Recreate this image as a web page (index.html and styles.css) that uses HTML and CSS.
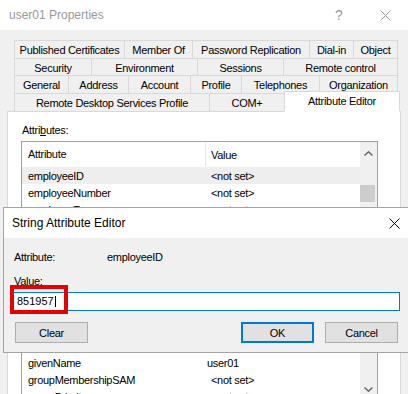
FILE: index.html
```html
<!DOCTYPE html>
<html lang="en">
<head>
    <meta charset="UTF-8">
    <title>user01 Properties</title>
    <link rel="stylesheet" href="styles.css">
</head>
<body>
    <div class="props">
        <div class="titlebar">
            <span class="title">user01 Properties</span>
            <span class="cap-btn help">?</span>
            <span class="cap-btn">
                <svg width="11" height="11" viewBox="0 0 11 11"><path d="M0.5 0.5L10.5 10.5M10.5 0.5L0.5 10.5" stroke="#9a9a9a" stroke-width="1" fill="none"/></svg>
            </span>
        </div>

        <div class="tabs">
            <div class="tab-row r1">
                <div class="tab t-pub">Published Certificates</div>
                <div class="tab t-mem">Member Of</div>
                <div class="tab t-pwd">Password Replication</div>
                <div class="tab t-dial">Dial-in</div>
                <div class="tab t-obj">Object</div>
            </div>
            <div class="tab-row r2">
                <div class="tab t-sec">Security</div>
                <div class="tab t-env">Environment</div>
                <div class="tab t-ses">Sessions</div>
                <div class="tab t-rem">Remote control</div>
            </div>
            <div class="tab-row r3">
                <div class="tab t-gen">General</div>
                <div class="tab t-addr">Address</div>
                <div class="tab t-acc">Account</div>
                <div class="tab t-prof">Profile</div>
                <div class="tab t-tel">Telephones</div>
                <div class="tab t-org">Organization</div>
            </div>
            <div class="tab-row r4">
                <div class="tab t-rds">Remote Desktop Services Profile</div>
                <div class="tab t-com">COM+</div>
                <div class="tab t-attr selected">Attribute Editor</div>
            </div>
        </div>

        <div class="panel">
            <div class="panel-label">Attri<u>b</u>utes:</div>
            <div class="list">
                <div class="list-body">
                    <div class="list-head">
                        <div class="col1">Attribute</div>
                        <div class="col2">Value</div>
                    </div>
                    <div class="row active"><div class="col1">employeeID</div><div class="col2 unset">&lt;not set&gt;</div></div>
                    <div class="row"><div class="col1">employeeNumber</div><div class="col2 unset">&lt;not set&gt;</div></div>
                    <div class="row"><div class="col1">employeeType</div><div class="col2 unset">&lt;not set&gt;</div></div>
                    <div class="row"><div class="col1">extensionAttribute1</div><div class="col2 unset">&lt;not set&gt;</div></div>
                    <div class="row"><div class="col1">extensionAttribute10</div><div class="col2 unset">&lt;not set&gt;</div></div>
                    <div class="row"><div class="col1">extensionAttribute11</div><div class="col2 unset">&lt;not set&gt;</div></div>
                    <div class="row"><div class="col1">extensionAttribute12</div><div class="col2 unset">&lt;not set&gt;</div></div>
                    <div class="row"><div class="col1">extensionAttribute13</div><div class="col2 unset">&lt;not set&gt;</div></div>
                    <div class="row"><div class="col1">extensionAttribute14</div><div class="col2 unset">&lt;not set&gt;</div></div>
                    <div class="row"><div class="col1">extensionAttribute15</div><div class="col2 unset">&lt;not set&gt;</div></div>
                    <div class="row"><div class="col1">facsimileTelephoneNumber</div><div class="col2 unset">&lt;not set&gt;</div></div>
                    <div class="row"><div class="col1">givenName</div><div class="col2">user01</div></div>
                    <div class="row"><div class="col1">groupMembershipSAM</div><div class="col2 unset">&lt;not set&gt;</div></div>
                    <div class="row"><div class="col1">groupPriority</div><div class="col2 unset">&lt;not set&gt;</div></div>
                </div>
                <div class="scrollbar">
                    <div class="sb-btn sb-up">
                        <svg width="9" height="5" viewBox="0 0 9 5"><path d="M0.5 4.5L4.5 0.8L8.5 4.5" stroke="#606060" stroke-width="1.4" fill="none"/></svg>
                    </div>
                    <div class="sb-thumb"></div>
                    <div class="sb-btn sb-down">
                        <svg width="9" height="5" viewBox="0 0 9 5"><path d="M0.5 0.5L4.5 4.2L8.5 0.5" stroke="#606060" stroke-width="1.4" fill="none"/></svg>
                    </div>
                </div>
            </div>
        </div>
    </div>

    <!-- String Attribute Editor, on top of the properties window -->
    <div class="dlg">
        <div class="dlg-title">
            <span class="dlg-caption">String Attribute Editor</span>
            <span class="cap-btn">
                <svg width="11" height="11" viewBox="0 0 11 11"><path d="M0.5 0.5L10.5 10.5M10.5 0.5L0.5 10.5" stroke="#000" stroke-width="1" fill="none"/></svg>
            </span>
        </div>
        <div class="dlg-body">
            <div class="field">
                <span class="field-label">Attribute:</span>
                <span>employeeID</span>
            </div>
            <div class="value-label">Value:</div>
            <div class="textbox">851957<span class="caret"></span></div>
            <div class="buttons">
                <button class="btn">Clear</button>
                <button class="btn default">OK</button>
                <button class="btn">Cancel</button>
            </div>
        </div>
        <div class="highlight"></div>
    </div>
</body>
</html>
```

FILE: styles.css
```css
* {
    box-sizing: border-box;
}
body {
    margin: 0;
    width: 408px;
    height: 394px;
    overflow: hidden;
    position: relative;
    background: #f0f0f0;
    font-family: "Liberation Sans", Arial, sans-serif;
    font-size: 11px;
    letter-spacing: -0.3px;
    color: #000;
}
.titlebar {
    height: 30px;
    background: #fff;
    display: flex;
    align-items: center;
    padding-left: 9px;
}
.title {
    flex: 1;
    font-size: 12px;
    letter-spacing: 0;
    color: #999;
}
.cap-btn {
    width: 46px;
    height: 30px;
    display: flex;
    align-items: center;
    justify-content: center;
}
.help {
    font-size: 14px;
    color: #9a9a9a;
    letter-spacing: 0;
}

/* tab strip */
.tabs {
    padding: 10px 0 0 14px;
}
.tab-row {
    display: flex;
    margin-top: -1px;
}
.tab-row.r1 { margin-top: 0; height: 19px; }
.tab-row.r2 { height: 18px; }
.tab-row.r3 { height: 19px; }
.tab-row.r4 { height: 19px; }
.tab {
    border: 1px solid #d9d9d9;
    margin-left: -1px;
    background: #f0f0f0;
    display: flex;
    align-items: center;
    justify-content: center;
    white-space: nowrap;
    padding-top: 1px;
}
.tab:first-child {
    margin-left: 0;
}
.t-pub { width: 111px; }
.t-mem { width: 69px; }
.t-pwd { width: 118px; }
.t-dial { width: 45px; }
.t-obj { width: 45px; }
.t-sec { width: 78px; }
.t-env { width: 107px; }
.t-ses { width: 87px; }
.t-rem { width: 115px; }
.t-gen { width: 55px; }
.t-addr { width: 61px; }
.t-acc { width: 63px; }
.t-prof { width: 52px; }
.t-tel { width: 79px; }
.t-org { width: 79px; }
.t-rds { width: 196px; }
.t-com { width: 76px; }
.t-attr { width: 116px; }
.tab.selected {
    background: #fff;
    height: 21px;
    margin-top: -2px;
    border-bottom-color: #fff;
    position: relative;
    z-index: 1;
    padding-top: 0;
    padding-bottom: 2px;
}

/* attribute editor page */
.panel {
    margin: -1px 0 0 7px;
    width: 394px;
    height: 300px;
    background: #fff;
    border: 1px solid #d9d9d9;
}
.panel-label {
    margin: 11px 0 0 14px;
    line-height: 14px;
}
.list {
    margin: 4px 0 0 13px;
    width: 357px;
    height: 261px;
    border: 1px solid #a0a0a0;
    display: flex;
}
.list-body {
    flex: 1;
}
.list-head {
    height: 25px;
    display: flex;
    align-items: center;
}
.list-head .col1 {
    height: 23px;
    line-height: 23px;
    border-right: 1px solid #e5e5e5;
}
.list-head .col2 {
    padding-left: 5px;
}
.col1 {
    width: 184px;
    padding-left: 6px;
    white-space: nowrap;
}
.col2 {
    padding-left: 1px;
    white-space: nowrap;
}
.col2.unset {
    padding-left: 5px;
}
.row {
    height: 17px;
    display: flex;
    align-items: center;
}
.row.active {
    background: #eeeeee;
}
.scrollbar {
    width: 17px;
    background: #f0f0f0;
    display: flex;
    flex-direction: column;
}
.sb-btn {
    height: 17px;
    display: flex;
    align-items: center;
    justify-content: center;
}
.sb-up {
    height: 22px;
}
.sb-thumb {
    margin: 21px 0 0 0;
    width: 15px;
    height: 17px;
    background: #cdcdcd;
}
.sb-down {
    margin-top: auto;
    height: 20px;
    align-items: flex-start;
    padding-top: 6px;
}

/* dialog */
.dlg {
    position: absolute;
    top: 207px;
    left: 3px;
    width: 415px;
    height: 146px;
    border: 1px solid #a3a3a3;
    background: #f0f0f0;
}
.dlg-title {
    height: 30px;
    background: #fff;
    display: flex;
    align-items: center;
    padding-left: 8px;
}
.dlg-caption {
    flex: 1;
    font-size: 12px;
    letter-spacing: 0;
}
.dlg-body {
    padding: 12px 0 0 10px;
}
.field {
    display: flex;
    line-height: 14px;
}
.field-label {
    width: 93px;
}
.value-label {
    margin-top: 10px;
    line-height: 14px;
}
.textbox {
    margin: 4px 0 0 -1px;
    width: 387px;
    height: 19px;
    border: 1px solid #0078d7;
    background: #fff;
    padding-left: 3px;
    line-height: 17px;
    letter-spacing: 0;
    display: flex;
    align-items: center;
}
.caret {
    display: inline-block;
    width: 1px;
    height: 11px;
    background: #000;
    margin-left: 1px;
}
.buttons {
    margin-top: 11px;
    width: 384px;
    display: flex;
}
.btn {
    width: 73px;
    height: 21px;
    margin: 0;
    border: 1px solid #adadad;
    background: #e1e1e1;
    font-family: inherit;
    font-size: 11px;
    letter-spacing: -0.3px;
    color: #000;
    padding: 0;
}
.btn:first-child {
    margin-left: 1px;
}
.btn.default {
    margin-left: auto;
    border-color: #0078d7;
    box-shadow: inset 0 0 0 1px #0078d7;
}
.btn.default + .btn {
    margin-left: 11px;
}
.highlight {
    position: absolute;
    left: 6px;
    top: 77px;
    width: 58px;
    height: 29px;
    border: 4px solid #e60000;
}
```
